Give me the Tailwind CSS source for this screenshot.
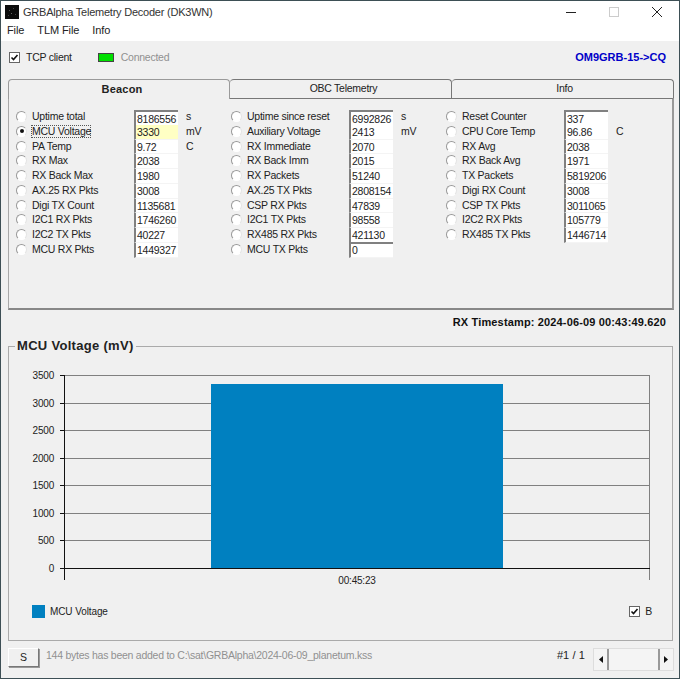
<!DOCTYPE html>
<html lang="en">
<head>
  <meta charset="UTF-8" />
  <title>GRBAlpha Telemetry Decoder (DK3WN)</title>
  <script src="https://cdn.jsdelivr.net/npm/@tailwindcss/browser@4"></script>
</head>
<body class="bg-[#f0f0f0] font-['Liberation_Sans',sans-serif] text-[10.5px] tracking-[-0.25px] text-[#222] overflow-hidden">
<div class="w-[680px] h-[679px] border border-[#3d4f55] flex flex-col bg-[#f0f0f0]">

  <!-- title bar -->
  <div class="h-[22px] bg-white flex items-center pl-[4px] shrink-0">
    <svg width="14" height="14" viewBox="0 0 14 14" class="mr-[4px]">
      <rect width="14" height="14" fill="#0c0c0c"/>
      <rect x="4" y="5" width="1" height="1" fill="#555"/><rect x="8" y="3" width="1" height="1" fill="#444"/>
      <rect x="6" y="8" width="1" height="1" fill="#666"/><rect x="10" y="9" width="1" height="1" fill="#444"/>
      <rect x="3" y="10" width="1" height="1" fill="#444"/>
    </svg>
    <span class="text-[11px] tracking-[-0.23px] text-[#333]">GRBAlpha Telemetry Decoder (DK3WN)</span>
    <div class="ml-auto flex items-center pr-[17px] gap-[33px]">
      <svg width="10" height="10" viewBox="0 0 10 10"><path d="M0 5.5H10" stroke="#222"/></svg>
      <svg width="10" height="10" viewBox="0 0 10 10"><rect x=".5" y=".5" width="9" height="9" fill="none" stroke="#ccc"/></svg>
      <svg width="10" height="10" viewBox="0 0 10 10"><path d="M0 0L10 10M10 0L0 10" stroke="#222"/></svg>
    </div>
  </div>

  <!-- menu -->
  <div class="h-[18px] bg-white flex items-center pl-[6px] gap-[13px] text-[11px] tracking-[-0.1px] shrink-0 pb-[3px]">
    <span>File</span><span>TLM File</span><span>Info</span>
  </div>

  <!-- connection row -->
  <div class="h-[38px] flex items-center pl-[8px] pr-[13px] shrink-0 pb-[5px]">
    <span class="w-[11px] h-[11px] bg-white border border-[#666] flex items-center justify-center">
      <svg width="9" height="9" viewBox="0 0 9 9"><path d="M1.5 4.5L3.5 6.5L7.5 2" fill="none" stroke="#111" stroke-width="1.6"/></svg>
    </span>
    <span class="ml-[6px]">TCP client</span>
    <span class="ml-[26px] w-[16px] h-[9px] bg-[#00e000] border border-[#444]"></span>
    <span class="ml-[7px] text-[#909090]">Connected</span>
    <span class="ml-auto font-bold text-[11px] tracking-normal text-[#0000c8]">OM9GRB-15-&gt;CQ</span>
  </div>

  <!-- tabs -->
  <div class="flex pl-[7px] pr-[5px] shrink-0 h-[19px]">
    <div class="w-[222px] h-[20px] pl-[6px] border border-b-0 border-[#9a9a9a] rounded-t-[4px] bg-[#f0f0f0] flex items-center justify-center font-bold text-[11px] tracking-[0.2px] z-10">Beacon</div>
    <div class="w-[222px] pl-[6px] border border-l-0 border-b-0 border-[#777] rounded-t-[4px] bg-[#f0f0f0] flex items-center justify-center">OBC Telemetry</div>
    <div class="flex-1 pl-[4px] border border-l-0 border-b-0 border-[#777] rounded-t-[4px] bg-[#f0f0f0] flex items-center justify-center">Info</div>
  </div>

  <!-- tab panel -->
  <div class="mx-[7px] mr-[5px] h-[212px] border-t border-t-[#777] border-l border-l-[#a8a8a8] border-r-2 border-r-[#999] border-b-2 border-b-[#888] pt-[11px] pl-[7px] flex shrink-0">

    <div class="w-[215px] grid grid-cols-[16px_102px_44px_auto] auto-rows-[14.78px]">
      <i class="w-[11px] h-[11px] mt-[1px] rounded-full bg-white border border-[#999] border-r-[#e4e4e4] border-b-[#fff]"></i><span class="leading-[13px]">Uptime total</span><b class="font-normal bg-white border-l-2 border-t-2 border-[#808080] pl-[1px] leading-[14px]">8186556</b><span class="pl-[8px] leading-[13px]">s</span>
      <i class="w-[11px] h-[11px] mt-[1px] rounded-full bg-white border border-[#999] border-r-[#e4e4e4] border-b-[#fff] flex items-center justify-center"><u class="w-[4px] h-[4px] rounded-full bg-[#111]"></u></i><span class="leading-[11px] whitespace-nowrap border border-dotted border-[#555] w-[60px] h-[13px] -ml-[1px]">MCU Voltage</span><b class="font-normal bg-[#ffffc4] border-l-2 border-b border-l-[#808080] border-b-[#f4f4f4] pl-[1px] leading-[15px]">3330</b><span class="pl-[8px] leading-[13px]">mV</span>
      <i class="w-[11px] h-[11px] mt-[1px] rounded-full bg-white border border-[#999] border-r-[#e4e4e4] border-b-[#fff]"></i><span class="leading-[13px]">PA Temp</span><b class="font-normal bg-white border-l-2 border-b border-l-[#808080] border-b-[#f4f4f4] pl-[1px] leading-[15px]">9.72</b><span class="pl-[8px] leading-[13px]">C</span>
      <i class="w-[11px] h-[11px] mt-[1px] rounded-full bg-white border border-[#999] border-r-[#e4e4e4] border-b-[#fff]"></i><span class="leading-[13px]">RX Max</span><b class="font-normal bg-white border-l-2 border-b border-l-[#808080] border-b-[#f4f4f4] pl-[1px] leading-[15px] col-span-2 w-[44px]">2038</b>
      <i class="w-[11px] h-[11px] mt-[1px] rounded-full bg-white border border-[#999] border-r-[#e4e4e4] border-b-[#fff]"></i><span class="leading-[13px]">RX Back Max</span><b class="font-normal bg-white border-l-2 border-b border-l-[#808080] border-b-[#f4f4f4] pl-[1px] leading-[15px] col-span-2 w-[44px]">1980</b>
      <i class="w-[11px] h-[11px] mt-[1px] rounded-full bg-white border border-[#999] border-r-[#e4e4e4] border-b-[#fff]"></i><span class="leading-[13px]">AX.25 RX Pkts</span><b class="font-normal bg-white border-l-2 border-b border-l-[#808080] border-b-[#f4f4f4] pl-[1px] leading-[15px] col-span-2 w-[44px]">3008</b>
      <i class="w-[11px] h-[11px] mt-[1px] rounded-full bg-white border border-[#999] border-r-[#e4e4e4] border-b-[#fff]"></i><span class="leading-[13px]">Digi TX Count</span><b class="font-normal bg-white border-l-2 border-b border-l-[#808080] border-b-[#f4f4f4] pl-[1px] leading-[15px] col-span-2 w-[44px]">1135681</b>
      <i class="w-[11px] h-[11px] mt-[1px] rounded-full bg-white border border-[#999] border-r-[#e4e4e4] border-b-[#fff]"></i><span class="leading-[13px]">I2C1 RX Pkts</span><b class="font-normal bg-white border-l-2 border-b border-l-[#808080] border-b-[#f4f4f4] pl-[1px] leading-[15px] col-span-2 w-[44px]">1746260</b>
      <i class="w-[11px] h-[11px] mt-[1px] rounded-full bg-white border border-[#999] border-r-[#e4e4e4] border-b-[#fff]"></i><span class="leading-[13px]">I2C2 TX Pkts</span><b class="font-normal bg-white border-l-2 border-b border-l-[#808080] border-b-[#f4f4f4] pl-[1px] leading-[15px] col-span-2 w-[44px]">40227</b>
      <i class="w-[11px] h-[11px] mt-[1px] rounded-full bg-white border border-[#999] border-r-[#e4e4e4] border-b-[#fff]"></i><span class="leading-[13px]">MCU RX Pkts</span><b class="font-normal bg-white border-l-2 border-b border-l-[#808080] border-b-[#f4f4f4] pl-[1px] leading-[15px] col-span-2 w-[44px]">1449327</b>
    </div>

    <div class="w-[215px] grid grid-cols-[16px_102px_44px_auto] auto-rows-[14.78px]">
      <i class="w-[11px] h-[11px] mt-[1px] rounded-full bg-white border border-[#999] border-r-[#e4e4e4] border-b-[#fff]"></i><span class="leading-[13px]">Uptime since reset</span><b class="font-normal bg-white border-l-2 border-t-2 border-[#808080] pl-[1px] leading-[14px]">6992826</b><span class="pl-[8px] leading-[13px]">s</span>
      <i class="w-[11px] h-[11px] mt-[1px] rounded-full bg-white border border-[#999] border-r-[#e4e4e4] border-b-[#fff]"></i><span class="leading-[13px]">Auxiliary Voltage</span><b class="font-normal bg-white border-l-2 border-b border-l-[#808080] border-b-[#f4f4f4] pl-[1px] leading-[15px]">2413</b><span class="pl-[8px] leading-[13px]">mV</span>
      <i class="w-[11px] h-[11px] mt-[1px] rounded-full bg-white border border-[#999] border-r-[#e4e4e4] border-b-[#fff]"></i><span class="leading-[13px]">RX Immediate</span><b class="font-normal bg-white border-l-2 border-b border-l-[#808080] border-b-[#f4f4f4] pl-[1px] leading-[15px] col-span-2 w-[44px]">2070</b>
      <i class="w-[11px] h-[11px] mt-[1px] rounded-full bg-white border border-[#999] border-r-[#e4e4e4] border-b-[#fff]"></i><span class="leading-[13px]">RX Back Imm</span><b class="font-normal bg-white border-l-2 border-b border-l-[#808080] border-b-[#f4f4f4] pl-[1px] leading-[15px] col-span-2 w-[44px]">2015</b>
      <i class="w-[11px] h-[11px] mt-[1px] rounded-full bg-white border border-[#999] border-r-[#e4e4e4] border-b-[#fff]"></i><span class="leading-[13px]">RX Packets</span><b class="font-normal bg-white border-l-2 border-b border-l-[#808080] border-b-[#f4f4f4] pl-[1px] leading-[15px] col-span-2 w-[44px]">51240</b>
      <i class="w-[11px] h-[11px] mt-[1px] rounded-full bg-white border border-[#999] border-r-[#e4e4e4] border-b-[#fff]"></i><span class="leading-[13px]">AX.25 TX Pkts</span><b class="font-normal bg-white border-l-2 border-b border-l-[#808080] border-b-[#f4f4f4] pl-[1px] leading-[15px] col-span-2 w-[44px]">2808154</b>
      <i class="w-[11px] h-[11px] mt-[1px] rounded-full bg-white border border-[#999] border-r-[#e4e4e4] border-b-[#fff]"></i><span class="leading-[13px]">CSP RX Pkts</span><b class="font-normal bg-white border-l-2 border-b border-l-[#808080] border-b-[#f4f4f4] pl-[1px] leading-[15px] col-span-2 w-[44px]">47839</b>
      <i class="w-[11px] h-[11px] mt-[1px] rounded-full bg-white border border-[#999] border-r-[#e4e4e4] border-b-[#fff]"></i><span class="leading-[13px]">I2C1 TX Pkts</span><b class="font-normal bg-white border-l-2 border-b border-l-[#808080] border-b-[#f4f4f4] pl-[1px] leading-[15px] col-span-2 w-[44px]">98558</b>
      <i class="w-[11px] h-[11px] mt-[1px] rounded-full bg-white border border-[#999] border-r-[#e4e4e4] border-b-[#fff]"></i><span class="leading-[13px]">RX485 RX Pkts</span><b class="font-normal bg-white border-l-2 border-b border-l-[#808080] border-b-[#f4f4f4] pl-[1px] leading-[15px] col-span-2 w-[44px]">421130</b>
      <i class="w-[11px] h-[11px] mt-[1px] rounded-full bg-white border border-[#999] border-r-[#e4e4e4] border-b-[#fff]"></i><span class="leading-[13px]">MCU TX Pkts</span><b class="font-normal bg-white border-l-2 border-t-2 border-b border-l-[#808080] border-t-[#808080] border-b-[#f4f4f4] pl-[1px] leading-[13px] col-span-2 w-[44px] h-[16px] -mt-[1px]">0</b>
    </div>

    <div class="w-[215px] grid grid-cols-[16px_102px_44px_auto] auto-rows-[14.78px]">
      <i class="w-[11px] h-[11px] mt-[1px] rounded-full bg-white border border-[#999] border-r-[#e4e4e4] border-b-[#fff]"></i><span class="leading-[13px]">Reset Counter</span><b class="font-normal bg-white border-l-2 border-t-2 border-[#808080] pl-[1px] leading-[14px] col-span-2 w-[44px]">337</b>
      <i class="w-[11px] h-[11px] mt-[1px] rounded-full bg-white border border-[#999] border-r-[#e4e4e4] border-b-[#fff]"></i><span class="leading-[13px]">CPU Core Temp</span><b class="font-normal bg-white border-l-2 border-b border-l-[#808080] border-b-[#f4f4f4] pl-[1px] leading-[15px]">96.86</b><span class="pl-[8px] leading-[13px]">C</span>
      <i class="w-[11px] h-[11px] mt-[1px] rounded-full bg-white border border-[#999] border-r-[#e4e4e4] border-b-[#fff]"></i><span class="leading-[13px]">RX Avg</span><b class="font-normal bg-white border-l-2 border-b border-l-[#808080] border-b-[#f4f4f4] pl-[1px] leading-[15px] col-span-2 w-[44px]">2038</b>
      <i class="w-[11px] h-[11px] mt-[1px] rounded-full bg-white border border-[#999] border-r-[#e4e4e4] border-b-[#fff]"></i><span class="leading-[13px]">RX Back Avg</span><b class="font-normal bg-white border-l-2 border-b border-l-[#808080] border-b-[#f4f4f4] pl-[1px] leading-[15px] col-span-2 w-[44px]">1971</b>
      <i class="w-[11px] h-[11px] mt-[1px] rounded-full bg-white border border-[#999] border-r-[#e4e4e4] border-b-[#fff]"></i><span class="leading-[13px]">TX Packets</span><b class="font-normal bg-white border-l-2 border-b border-l-[#808080] border-b-[#f4f4f4] pl-[1px] leading-[15px] col-span-2 w-[44px]">5819206</b>
      <i class="w-[11px] h-[11px] mt-[1px] rounded-full bg-white border border-[#999] border-r-[#e4e4e4] border-b-[#fff]"></i><span class="leading-[13px]">Digi RX Count</span><b class="font-normal bg-white border-l-2 border-b border-l-[#808080] border-b-[#f4f4f4] pl-[1px] leading-[15px] col-span-2 w-[44px]">3008</b>
      <i class="w-[11px] h-[11px] mt-[1px] rounded-full bg-white border border-[#999] border-r-[#e4e4e4] border-b-[#fff]"></i><span class="leading-[13px]">CSP TX Pkts</span><b class="font-normal bg-white border-l-2 border-b border-l-[#808080] border-b-[#f4f4f4] pl-[1px] leading-[15px] col-span-2 w-[44px]">3011065</b>
      <i class="w-[11px] h-[11px] mt-[1px] rounded-full bg-white border border-[#999] border-r-[#e4e4e4] border-b-[#fff]"></i><span class="leading-[13px]">I2C2 RX Pkts</span><b class="font-normal bg-white border-l-2 border-b border-l-[#808080] border-b-[#f4f4f4] pl-[1px] leading-[15px] col-span-2 w-[44px]">105779</b>
      <i class="w-[11px] h-[11px] mt-[1px] rounded-full bg-white border border-[#999] border-r-[#e4e4e4] border-b-[#fff]"></i><span class="leading-[13px]">RX485 TX Pkts</span><b class="font-normal bg-white border-l-2 border-b border-l-[#808080] border-b-[#f4f4f4] pl-[1px] leading-[15px] col-span-2 w-[44px]">1446714</b>
    </div>
  </div>

  <!-- timestamp -->
  <div class="h-[25px] flex items-center justify-end pr-[13px] font-bold text-[11px] tracking-[0.15px] text-[#111] shrink-0">RX Timestamp: 2024-06-09 00:43:49.620</div>

  <!-- chart group -->
  <div class="mt-[11px] ml-[7px] mr-[6px] h-[295px] border border-[#aaa] relative shrink-0 flex flex-col">
    <span class="absolute -top-[9px] left-[6px] px-[2px] bg-[#f0f0f0] font-bold text-[13px] leading-[16px] text-[#222] tracking-[0.3px]">MCU Voltage (mV)</span>
    <svg viewBox="9 347 664 244" width="664" height="244" class="block tracking-[-0.2px]" font-family="Liberation Sans" font-size="10" fill="#222">
      <g stroke="#808080">
        <path d="M60 375.5H650M60 403.5H650M60 430.5H650M60 458.5H650M60 485.5H650M60 513.5H650M60 540.5H650"/>
        <path d="M649.5 375V580"/>
      </g>
      <rect x="211" y="384" width="292" height="184" fill="#0080c0"/>
      <path d="M60 568.5H650M64.5 375V580" stroke="#111"/>
      <path d="M60 375.5H64M60 403.5H64M60 430.5H64M60 458.5H64M60 485.5H64M60 513.5H64M60 540.5H64" stroke="#111"/>
      <g text-anchor="end">
        <text x="54" y="379">3500</text><text x="54" y="407">3000</text><text x="54" y="434">2500</text><text x="54" y="462">2000</text>
        <text x="54" y="489">1500</text><text x="54" y="517">1000</text><text x="54" y="544">500</text><text x="54" y="572">0</text>
      </g>
      <text x="357" y="584" text-anchor="middle">00:45:23</text>
    </svg>
    <div class="flex items-center pl-[23px] pr-[20px] mt-[13px]">
      <span class="w-[13px] h-[13px] bg-[#0080c0]"></span>
      <span class="ml-[5px] text-[10px] tracking-[-0.1px]">MCU Voltage</span>
      <span class="ml-auto w-[11px] h-[11px] bg-white border border-[#666] flex items-center justify-center">
        <svg width="9" height="9" viewBox="0 0 9 9"><path d="M1.5 4.5L3.5 6.5L7.5 2" fill="none" stroke="#111" stroke-width="1.6"/></svg>
      </span>
      <span class="ml-[5px]">B</span>
    </div>
  </div>

  <!-- status row -->
  <div class="flex ml-[7px] mr-[5px] mt-[7px] shrink-0">
    <div class="w-[31px] h-[19px] bg-[#f0f0f0] border border-[#fff] border-r-[#777] border-b-[#777] shadow-[1px_1px_0_#999] flex items-center justify-center">S</div>
    <span class="ml-[7px] text-[#909090] leading-[15px]">144 bytes has been added to C:\sat\GRBAlpha\2024-06-09_planetum.kss</span>
    <span class="ml-auto mr-[8px] leading-[15px] text-[11px] tracking-[0.1px]">#1 / 1</span>
    <div class="w-[81px] h-[23px] flex border border-[#ddd] bg-[#f4f4f4]">
      <span class="w-[15px] border-r-2 border-[#999] flex items-center justify-center"><svg width="5" height="7" viewBox="0 0 5 7"><path d="M5 0V7L1 3.5Z" fill="#111"/></svg></span>
      <span class="flex-1"></span>
      <span class="w-[15px] border-l-2 border-[#999] flex items-center justify-center"><svg width="5" height="7" viewBox="0 0 5 7"><path d="M0 0V7L4 3.5Z" fill="#111"/></svg></span>
    </div>
  </div>
</div>
</body>
</html>
